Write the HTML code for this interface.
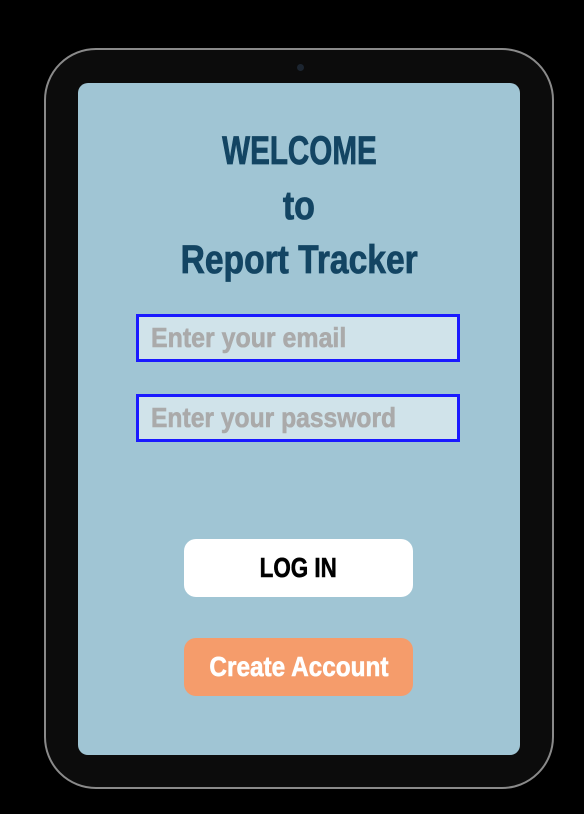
<!DOCTYPE html>
<html><head><meta charset="utf-8"><style>
html,body{margin:0;padding:0;background:#000;width:584px;height:814px;overflow:hidden;font-family:"Liberation Sans",sans-serif;}
.tab{position:absolute;left:44px;top:48px;width:506px;height:737px;border-radius:52px;background:#0c0c0c;border:2px solid #8a8a8a;}
.cam{position:absolute;left:297px;top:64px;width:7px;height:7px;border-radius:50%;background:#1c2530;}
.scr{position:absolute;left:78px;top:83px;width:442px;height:672px;border-radius:10px;background:#a0c5d4;}
.c{position:absolute;left:0;width:598px;text-align:center;white-space:nowrap;}
.c span{display:inline-block;transform-origin:center;font-weight:bold;-webkit-text-stroke:0.8px currentColor;}
.t{color:#134563;font-size:40px;}
.in{position:absolute;left:136px;width:318px;height:42px;border:3px solid #1a1aff;background:#d0e3ea;}
.in span{position:absolute;left:12px;top:5px;font-size:28px;font-weight:bold;color:#aaa;transform-origin:left;white-space:nowrap;-webkit-text-stroke:0.6px #aaa;}
.b{position:absolute;left:184px;width:229px;height:58px;border-radius:12px;text-align:center;line-height:58px;font-size:28px;}
.b span{display:inline-block;font-weight:bold;-webkit-text-stroke:0.6px currentColor;}
</style></head><body>
<div class="tab"></div>
<div class="cam"></div>
<div class="scr"></div>
<div class="c t" style="top:129px"><span style="transform:scaleX(.74)">WELCOME</span></div>
<div class="c t" style="top:184px"><span style="transform:scaleX(.85)">to</span></div>
<div class="c t" style="top:238px"><span style="transform:scaleX(.84)">Report Tracker</span></div>
<div class="in" style="top:314px"><span style="transform:scaleX(.89)">Enter your email</span></div>
<div class="in" style="top:394px"><span style="transform:scaleX(.88)">Enter your password</span></div>
<div class="b" style="top:539px;background:#fff;color:#000"><span style="transform:scaleX(.8)">LOG IN</span></div>
<div class="b" style="top:638px;background:#f59c6b;color:#fff"><span style="transform:scaleX(.87)">Create Account</span></div>
</body></html>
